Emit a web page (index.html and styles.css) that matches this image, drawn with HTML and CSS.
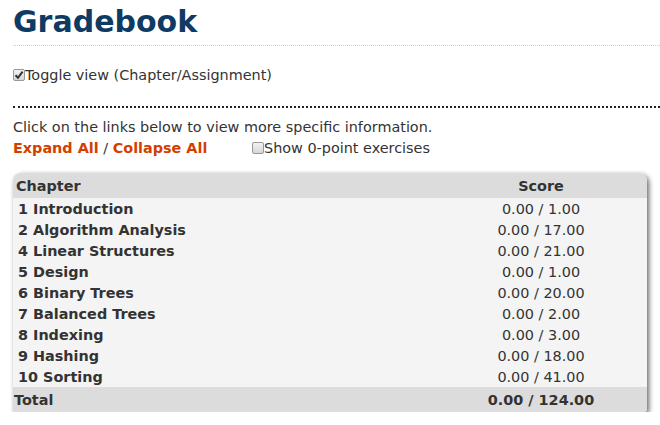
FILE: index.html
```html
<!DOCTYPE html>
<html>
<head>
<meta charset="utf-8">
<link rel="stylesheet" href="styles.css">
</head>
<body>
<div class="page">
  <h1 class="title">Gradebook</h1>
  <div class="toggle-row">
    <span class="cb cb-checked"><svg viewBox="0 0 12 12" width="12" height="12"><path d="M2.5 6.2 L5 8.8 L9.6 2.6" fill="none" stroke="#333" stroke-width="2"/></svg></span><span>Toggle view (Chapter/Assignment)</span>
  </div>
  <hr class="divider">
  <p class="intro">Click on the links below to view more specific information.</p>
  <div class="controls">
    <span class="links"><a class="lnk">Expand All</a> / <a class="lnk">Collapse All</a></span>
    <span class="zero"><span class="cb"></span>Show 0-point exercises</span>
  </div>
  <div class="grades">
    <div class="row head"><div class="c1">Chapter</div><div class="c2">Score</div></div>
    <div class="row item"><div class="c1">1 Introduction</div><div class="c2">0.00 / 1.00</div></div>
    <div class="row item"><div class="c1">2 Algorithm Analysis</div><div class="c2">0.00 / 17.00</div></div>
    <div class="row item"><div class="c1">4 Linear Structures</div><div class="c2">0.00 / 21.00</div></div>
    <div class="row item"><div class="c1">5 Design</div><div class="c2">0.00 / 1.00</div></div>
    <div class="row item"><div class="c1">6 Binary Trees</div><div class="c2">0.00 / 20.00</div></div>
    <div class="row item"><div class="c1">7 Balanced Trees</div><div class="c2">0.00 / 2.00</div></div>
    <div class="row item"><div class="c1">8 Indexing</div><div class="c2">0.00 / 3.00</div></div>
    <div class="row item"><div class="c1">9 Hashing</div><div class="c2">0.00 / 18.00</div></div>
    <div class="row item"><div class="c1">10 Sorting</div><div class="c2">0.00 / 41.00</div></div>
    <div class="row total"><div class="c1">Total</div><div class="c2">0.00 / 124.00</div></div>
  </div>
</div>
</body>
</html>
```
FILE: styles.css
```css
html, body {
  margin: 0;
  padding: 0;
  background: #fff;
}
body {
  font-family: "DejaVu Sans", sans-serif;
  font-size: 14.4px;
  color: #333;
}
.page {
  padding: 0 0 0 13px;
}
.title {
  margin: 0;
  padding: 5px 0 6px;
  font-size: 30px;
  line-height: 34px;
  font-weight: bold;
  color: #0e3a63;
  border-bottom: 1px dotted #ccc;
}
.toggle-row {
  display: flex;
  align-items: center;
  margin-top: 20px;
  height: 17px;
}
.cb {
  display: inline-block;
  box-sizing: border-box;
  width: 12px;
  height: 12px;
  border: 1px solid #999;
  border-radius: 2px;
  background: linear-gradient(#f2f2f2, #d6d6d6);
  vertical-align: -1px;
}
.cb-checked {
  position: relative;
  flex: none;
}
.cb-checked svg {
  position: absolute;
  left: -1px;
  top: -1px;
}
.divider {
  margin: 23px 0 0;
  border: 0;
  border-top: 2px dotted #222;
  height: 0;
}
.intro {
  margin: 11px 0 0;
  line-height: 17px;
}
.controls {
  display: flex;
  align-items: center;
  margin-top: 3px;
  height: 17px;
}
.links {
  width: 239px;
}
.lnk {
  color: #d33f00;
  font-weight: bold;
}
.grades {
  margin: 17px 13px 0 0;
  border-radius: 8px 8px 3px 3px;
  box-shadow: 2px 2px 5px rgba(0,0,0,0.6);
  overflow: hidden;
  background: #f4f4f4;
}
.row {
  display: grid;
  grid-template-columns: 1fr 212px;
  align-items: center;
  font-weight: bold;
}
.row .c2 {
  text-align: center;
}
.head {
  background: #dcdcdc;
  height: 25px;
}
.head .c1 {
  padding-left: 3px;
}
.item {
  height: 21px;
}
.item .c1 {
  padding-left: 5px;
}
.item .c2 {
  font-weight: normal;
}
.total {
  background: #dcdcdc;
  height: 25px;
}
.total .c1 {
  padding-left: 1px;
}
```
